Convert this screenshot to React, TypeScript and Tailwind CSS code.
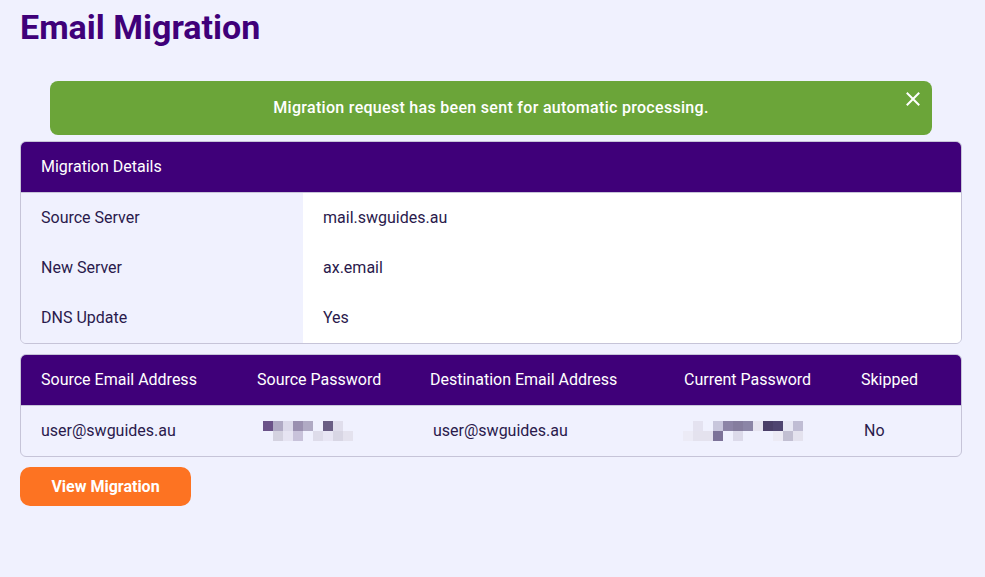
import React from 'react';

type Cell = string | null;

// blurred password rendered as rows of 10px blocks
const sourcePwd: Cell[][] = [
  ['#6a5288', '#b0aac4', '#dcdaea', '#9a90b0', '#b0aac4', null, '#6a5e84', '#e0deec', null],
  [null, '#d4d2e0', '#e6e4f2', '#c8c2da', null, '#dedcea', '#e8e6f4', '#d8d6e4', '#e4e2ee'],
];

const currentPwd: Cell[][] = [
  [null, '#e4e2f0', null, '#c8c6dc', '#8c84a6', '#857d9e', '#8b85a6', '#e6e4f0', '#4a3f68', '#4f4570', '#e8e8f4', '#c0bdd4'],
  ['#ecebf6', '#e4e2ee', '#e4e2ee', '#7c7298', null, '#dcdaea', null, null, null, '#eceaf4', '#c2bfd2', '#e4e2ee'],
];

function Pixelated({ rows }: { rows: Cell[][] }) {
  return (
    <div className="flex flex-col">
      {rows.map((row, r) => (
        <div key={r} className="flex">
          {row.map((c, i) => (
            <div key={i} className="w-[10px] h-[10px]" style={{ backgroundColor: c ?? 'transparent' }} />
          ))}
        </div>
      ))}
    </div>
  );
}

const details = [
  { label: 'Source Server', value: 'mail.swguides.au' },
  { label: 'New Server', value: 'ax.email' },
  { label: 'DNS Update', value: 'Yes' },
];

const columns = ['Source Email Address', 'Source Password', 'Destination Email Address', 'Current Password', 'Skipped'];

export default function App() {
  return (
    <main className="min-h-screen bg-[#f0f1fe] pl-[20px] pr-[23px] pt-[7px] font-['Roboto',sans-serif] text-[16px] text-[#2a1a4c]">
      <h1 className="text-[34px] leading-[40px] font-bold text-[#3f0079]">Email Migration</h1>

      {/* Success alert */}
      <div className="relative mx-[30px] mt-[34px] h-[54px] rounded-[8px] bg-[#6ba539] pt-[16px] text-center text-white">
        <p className="leading-[22px] font-medium tracking-[0.3px]">Migration request has been sent for automatic processing.</p>
        <button className="absolute top-[11px] right-[12px] w-[14px] h-[14px]">
          <svg viewBox="0 0 14 14" className="w-full h-full" stroke="white" strokeWidth="2" strokeLinecap="square">
            <path d="M1.5 1.5 L12.5 12.5 M12.5 1.5 L1.5 12.5" />
          </svg>
        </button>
      </div>

      {/* Migration details card */}
      <section className="mt-[6px] rounded-[6px] border border-[#c6c4d8] overflow-hidden">
        <div className="h-[51px] flex items-center px-[20px] bg-[#3f0079] text-white border-b border-[#c6c4d8]">
          Migration Details
        </div>
        {details.map(d => (
          <div key={d.label} className="flex h-[50px]">
            <div className="w-[30%] flex items-center px-[20px] bg-[#f0f1fe]">{d.label}</div>
            <div className="flex-1 flex items-center px-[20px] bg-white">{d.value}</div>
          </div>
        ))}
      </section>

      {/* Mailbox table */}
      <section className="mt-[10px] rounded-[6px] border border-[#c6c4d8] overflow-hidden">
        <div className="grid grid-cols-[216px_173px_254px_177px_1fr] h-[51px] items-center bg-[#3f0079] text-white border-b border-[#c6c4d8]">
          {columns.map(c => (
            <div key={c} className="px-[20px] whitespace-nowrap">{c}</div>
          ))}
        </div>
        <div className="grid grid-cols-[216px_173px_254px_177px_1fr] h-[50px] items-center">
          <div className="px-[20px]">user@swguides.au</div>
          <div className="pl-[26px]"><Pixelated rows={sourcePwd} /></div>
          <div className="pl-[23px]">user@swguides.au</div>
          <div className="pl-[19px]"><Pixelated rows={currentPwd} /></div>
          <div className="pl-[23px]">No</div>
        </div>
      </section>

      <button className="mt-[10px] w-[171px] h-[39px] rounded-[10px] bg-[#fd7322] text-white font-bold text-[16px]">
        View Migration
      </button>
    </main>
  );
}
